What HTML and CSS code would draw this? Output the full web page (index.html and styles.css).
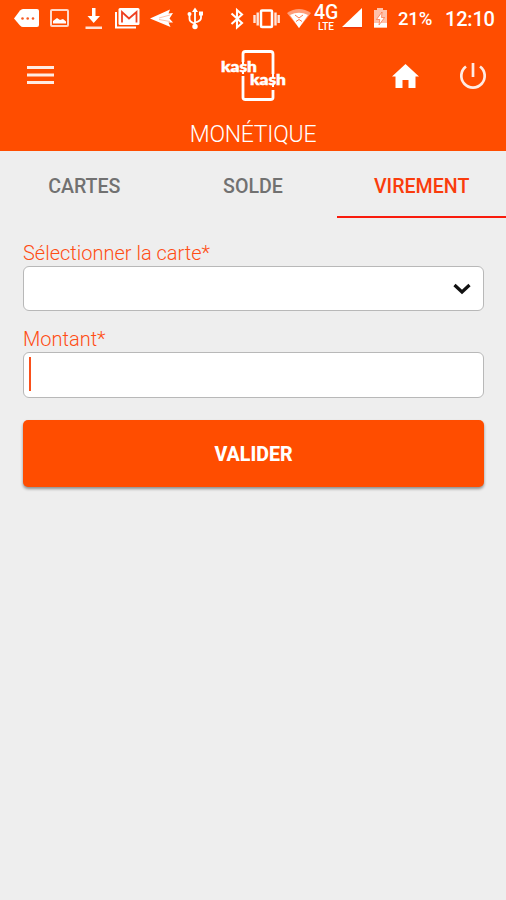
FILE: index.html
```html
<!DOCTYPE html>
<html lang="fr">
<head>
<meta charset="utf-8">
<title>Monétique</title>
<link rel="stylesheet" href="styles.css">
</head>
<body>
<header class="header">
  <div class="status">
    <svg class="more" width="28" height="38" viewBox="13 0 28 38"><path fill="#fff" d="M14 18.500 20 10.500Q21.500 9 23 9H37Q39 9 39 11V25Q39 27 37 27H23Q21.500 27 20 25.500Z"/><g fill="#f75a22"><circle cx="22.500" cy="18.500" r="1.300"/><circle cx="27.700" cy="18.500" r="1.300"/><circle cx="33" cy="18.500" r="1.300"/></g></svg>
    <svg width="34" height="38" viewBox="41 0 34 38"><rect x="51" y="10" width="17" height="16" rx="1" fill="none" stroke="#ffd7c8" stroke-width="2"/><path fill="#fff" d="M53 23.500V21l4-3 3 2 3-1 3 2.500v2Z"/></svg>
    <svg width="34" height="38" viewBox="75 0 34 38"><path fill="#fff" d="M92 8h3.500v8H100l-6.300 7-6.200-7H92Z"/><path fill="#ffe0d4" d="M85.500 26.500H102V29H85.500Z"/></svg>
    <svg width="36" height="38" viewBox="109 0 36 38"><path fill="none" stroke="#fff" stroke-width="2" d="M116 12v15.500h20"/><rect x="118.500" y="8" width="21" height="17" rx="1.500" fill="#fff"/><path fill="none" stroke="#ee3f20" stroke-width="1.800" d="M122 22.500V12l7 6.500 7.500-6.500v10.500"/></svg>
    <svg width="35" height="38" viewBox="145 0 35 38"><path fill="#fff" d="M150 18.500 170 9.500 168.500 13.500 173 13 169.500 18.500 173 22.500 168.500 22.500 170.500 27Z"/><path stroke="#ffb296" stroke-width=".8" fill="none" d="m159 18 11-3M159 19.500l11 2"/></svg>
    <svg width="46" height="38" viewBox="180 0 46 38"><path fill="none" stroke="#fff" stroke-width="1.800" d="M195 11V27M189.500 15v4q0 3 5.500 4.500M201 14v4q0 3-6 4.500"/><path fill="#fff" d="m192 12 3-4.500 3 4.500Z"/><circle cx="189.500" cy="14" r="2" fill="#fff"/><path fill="#fff" d="M199 11.500h4v4h-4Z"/><circle cx="195" cy="26.500" r="2.700" fill="#fff"/></svg>
    <svg width="24" height="38" viewBox="226 0 24 38"><path fill="none" stroke="#fff" stroke-width="2.100" d="m231.500 13.500 10.500 9.500-5 4.500V10l5 4.500-10.500 9.500"/></svg>
    <svg width="34" height="38" viewBox="250 0 34 38"><rect x="261" y="10.500" width="11" height="16.500" rx="1" fill="none" stroke="#fff" stroke-width="2.500"/><path stroke="#ffe5db" stroke-width="2.400" d="M257.700 12.500v13M254.500 15v8M275.500 12.500v13M278.700 15v8"/></svg>
    <svg width="29" height="38" viewBox="284 0 29 38"><path fill="#ff9d78" d="M287 13q12-8 24 0L299 28Z"/><path fill="#fff" d="M290 15q9-4.500 18 0l-9 13Z"/><path fill="none" stroke="#ff794a" stroke-width="1" d="m295 15 4 3 4-3M296 21.500l3-2 3 2"/></svg>
    <div class="network"><span class="g4">4G</span><span class="lte">LTE</span></div>
    <svg width="29" height="38" viewBox="339 0 29 38"><path fill="#fff" d="M362 8V27H342Z"/><path stroke="#e62d0d" d="M344 27.800h18"/></svg>
    <svg width="27" height="38" viewBox="368 0 27 38"><path fill="#ffc1aa" d="M374 10h3V8h6v2h4v17.500h-13Z"/><path fill="#fff" d="M374 23h13v4.500h-13Z"/><path fill="#fff" stroke="#ff5a20" stroke-width=".6" d="m382 12-5.500 7.500h3.300L379 25l5.500-7.500h-3Z"/></svg>
    <span class="percent">21%</span><span class="clock">12:10</span>
  </div>
  <div class="toolbar">
    <svg class="menu" width="27" height="20" viewBox="0 0 27 20"><path stroke="#ffebe3" stroke-width="3.200" d="M0 2.500h27M0 10h27M0 17.500h27"/></svg>
    <svg class="logo" width="68" height="54" viewBox="219 49 68 54">
      <path fill="none" stroke="#fff" stroke-width="2.800" d="M243 62v-8q0-2.500 2.500-2.500h25q2.500 0 2.500 2.500V74M243 76v21.500q0 2 2.500 2h25q2.500 0 2.500-2V90"/>
      <text x="221" y="72" textLength="36" lengthAdjust="spacingAndGlyphs">kash</text><text x="250" y="85" textLength="36" lengthAdjust="spacingAndGlyphs">kash</text>
      <path stroke="#fff" stroke-width="2" d="M243 61v4M243 71v3M273 74v4M273 84v3"/>
    </svg>
    <svg class="home" width="27" height="25" viewBox="0 0 27 25"><path fill="#fff" d="M13.500 0 27 12.500h-3.500V24H16.500v-8h-6v8H3.500V12.500H0Z"/></svg>
    <svg class="power" width="28" height="28" viewBox="0 0 28 28"><path fill="none" stroke="#ffebe3" stroke-width="2.700" d="M14 1v14M7 4.500a11.700 11.700 0 1 0 14 0"/></svg>
  </div>
  <h1 class="title">MONÉTIQUE</h1>
</header>
<nav class="tabs"><a class="tab">CARTES</a><a class="tab">SOLDE</a><a class="tab active">VIREMENT</a></nav>
<main class="form">
  <div class="label select-label">Sélectionner la carte*</div>
  <div class="field select"><svg width="18" height="12" viewBox="0 0 18 12"><path fill="none" stroke="#111" stroke-width="3.200" d="m1.500 2 7.500 7 7.500-7"/></svg></div>
  <div class="label amount-label">Montant*</div>
  <div class="field amount"><span class="caret"></span></div>
  <button class="submit">VALIDER</button>
</main>
</body>
</html>
```
FILE: styles.css
```css
* { box-sizing: border-box; }
body { margin: 0; height: 900px; background: #eee; font-family: Roboto, sans-serif; overflow: hidden; }
svg { display: block; flex: none; }
.header { height: 151px; background: #ff4d00; color: #fff; }
.status { display: flex; height: 38px; padding-left: 13px; }
.network { width: 26px; height: 38px; display: flex; flex-direction: column; align-items: center; padding-top: 4px; }
.g4 { font-size: 19.5px; line-height: 18px; font-weight: 500; letter-spacing: -0.3px; }
.lte { font-size: 10px; line-height: 10px; font-weight: 500; }
.percent { width: 50px; padding-left: 3px; font-size: 18.5px; line-height: 39px; font-weight: 500; letter-spacing: -0.2px; }
.clock { font-size: 20px; line-height: 38px; font-weight: 500; letter-spacing: -0.2px; }
.toolbar { display: flex; height: 80px; padding-left: 27px; }
.menu { margin-top: 27px; }
.logo { margin: 11px 0 0 165px; }
.logo text { font: 900 14.5px Lato, sans-serif; fill: #fff; stroke: #fff; stroke-width: .5px; }
.home { margin: 26px 0 0 105px; }
.power { margin: 24px 0 0 40px; }
.title { margin: 0; font-size: 23px; line-height: 34px; font-weight: 300; text-align: center; letter-spacing: -0.25px; }
.tabs { display: grid; grid-template-columns: 1fr 1fr 1fr; height: 68px; }
.tab { text-align: center; font-size: 19.6px; line-height: 72px; height: 67px; font-weight: 500; color: #717171; }
.active { color: #fa3c0c; border-bottom: 2px solid #f91b0c; }
.form { padding: 22px 22px 0 23px; }
.label { font-size: 20px; font-weight: 300; line-height: 25px; color: #ff4d14; }
.amount-label { margin-top: 16px; }
.field { display: flex; align-items: center; height: 45px; border: 1px solid #b8b8b8; border-radius: 6px; background: #fff; }
.select { justify-content: flex-end; padding-right: 12px; }
.amount { height: 46px; padding-left: 5px; }
.caret { width: 2px; height: 34px; background: #f9501b; margin-bottom: 2px; }
.submit { display: block; width: 100%; height: 67px; margin-top: 22px; padding: 2px 0 0; border: 0; border-radius: 5px; background: #ff4d00; color: #fff; box-shadow: 0 2px 3px #0006; font: 800 19.6px Roboto, sans-serif; }
```
